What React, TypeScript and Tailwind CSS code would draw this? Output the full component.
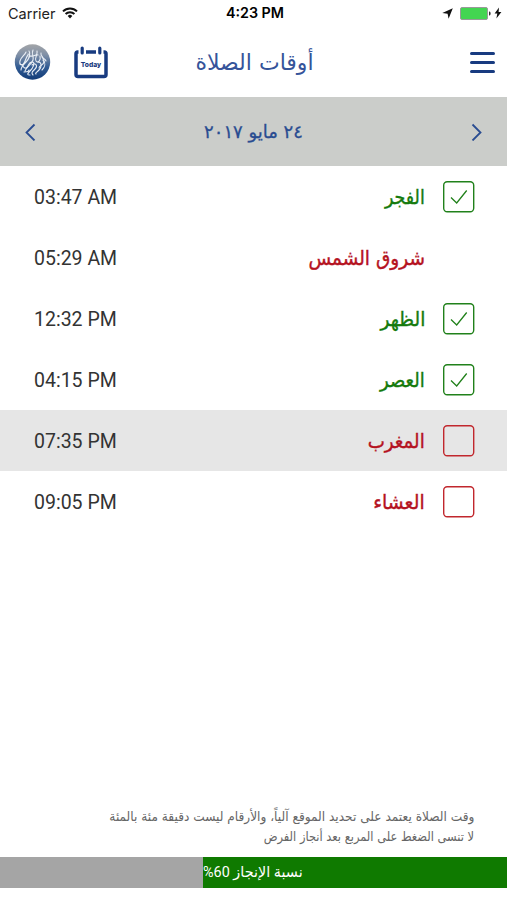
import React from "react";

const prayers = [
  { name: "الفجر", time: "03:47 AM", status: "done", fit: "scale-x-[0.87]" },
  { name: "شروق الشمس", time: "05:29 AM", status: "none", fit: "scale-x-[0.925]" },
  { name: "الظهر", time: "12:32 PM", status: "done", fit: "scale-x-[0.925]" },
  { name: "العصر", time: "04:15 PM", status: "done", fit: "scale-x-[0.9]" },
  { name: "المغرب", time: "07:35 PM", status: "missed", active: true, fit: "scale-x-[0.91]" },
  { name: "العشاء", time: "09:05 PM", status: "missed", fit: "scale-x-[0.94]" },
];

const StatusBar = () => (
  <div className="flex h-7 items-center justify-between pl-2 pr-[5px] font-['Inter',sans-serif] text-black">
    <div className="flex w-[180px] items-center gap-[6px] text-[14.5px] text-[#222]">
      <span>Carrier</span>
      <svg className="-mt-[3px]" width="16" height="12" viewBox="0 0 16 12" fill="none" stroke="#111" strokeWidth="2">
        <path d="M1 4.4a10 10 0 0 1 14 0" />
        <path d="M3.6 7a6.2 6.2 0 0 1 8.8 0" />
        <path d="M5.7 8.9a3.3 3.3 0 0 1 4.6 0L8 11.4z" fill="#111" stroke="none" />
      </svg>
    </div>
    <span className="-mt-[2px] text-[14.300px] font-semibold">4:23 PM</span>
    <div className="-mt-[2px] flex w-[180px] items-center justify-end gap-[4px]">
      <svg className="mr-[3px]" width="11" height="11" viewBox="0 0 11 11">
        <path d="M10.8.3 6.6 10.700 5.600 5.700.3 5.100z" fill="#111" />
      </svg>
      <svg width="31" height="13" viewBox="0 0 31 13">
        <rect x=".5" y=".5" width="27" height="12" rx="1.5" fill="#43d551" stroke="#999" />
        <path d="M29 4.5h.4a1.2 2 0 0 1 0 4H29z" fill="#333" />
      </svg>
      <svg className="-ml-[1px]" width="8" height="12" viewBox="0 0 8 12">
        <path d="M5 .5.6 6.6h2.7L2.4 11.5l5-6.4H4.6z" fill="#111" />
      </svg>
    </div>
  </div>
);

const Logo = () => (
  <svg width="37" height="37" viewBox="0 0 37 37" fill="none">
    <defs>
      <linearGradient id="orb" x1="0" y1="0" x2="0" y2="1">
        <stop offset="0" stopColor="#a3a5a8" />
        <stop offset=".3" stopColor="#8090a7" />
        <stop offset=".65" stopColor="#315b93" />
        <stop offset="1" stopColor="#133c78" />
      </linearGradient>
    </defs>
    <circle cx="18.5" cy="18" r="17.700" fill="url(#orb)" />
    <g stroke="#e9eef5" strokeWidth="1.100" strokeLinecap="round">
      <path d="M12 8c-1 3-5 5-6 9s2 5 4 2 2-6 4-8M15 7c2 3 0 8-3 11s-5 5-5 8M19 6c-2 4 1 6 0 10s-6 6-8 11M23 7c1 4-3 7-1 10s5-1 4-5M27 9c-1 3 4 5 3 9s-5 3-5 6" />
      <path d="M6 20c4 1 3 5 6 4s2-6 6-6 1 6-2 9-3 4 0 4M18 21c4-3 6 1 3 4s-4 4-2 6M24 18c4 0 4 5 1 8s-4 3-3 4M29 16c3 3 2 7-1 10M16 12c4 1 5-2 8-1M10 28c3-1 4 1 5-2M28 13c1 2 3 1 4 4M14 10c2 0 2 2 1 3" />
    </g>
  </svg>
);

const Calendar = () => (
  <svg width="34" height="33" viewBox="0 0 34 33">
    <path
      d="M4.5 6H3.7Q2 6 2 7.8V28.500Q2 30.500 4 30.500H30Q32 30.500 32 28.500V7.800Q32 6 30.300 6H29.500M12 6H22"
      fill="none"
      stroke="#183b80"
      strokeWidth="3.500"
    />
    <path d="M8.200 2V7M25.800 2V7" stroke="#183b80" strokeWidth="3.200" strokeLinecap="round" />
    <text x="17" y="20.500" textAnchor="middle" fontSize="6.700" fontWeight="800" fill="#183b80" fontFamily="Inter, sans-serif">
      Today
    </text>
  </svg>
);

const Box = ({ status }: { status: string }) => {
  if (status === "none") return <div className="size-8" />;
  const color = status === "done" ? "#21811b" : "#c1272d";
  return (
    <svg width="32" height="32" viewBox="0 0 32 32" fill="none" stroke={color}>
      <rect x=".7" y=".7" width="30" height="30" rx="3.500" strokeWidth="1.400" />
      {status === "done" && <path d="M8 16.500 13.700 22 23.700 9.500" strokeWidth="1.300" />}
    </svg>
  );
};

const App = () => {
  return (
    <div className="flex h-[900px] w-[507px] flex-col bg-white font-['DejaVu_Sans',sans-serif]">
      <StatusBar />
      <header className="flex h-[69px] items-center justify-between pl-[14px] pr-3">
        <div className="flex w-24 items-center gap-[23px]">
          <Logo />
          <Calendar />
        </div>
        <h1 dir="rtl" className="whitespace-nowrap text-[22px] text-[#35549a]">
          أوقات الصلاة
        </h1>
        <div className="flex w-24 flex-col items-end gap-[6px]">
          <div className="h-[3px] w-[25px] rounded-full bg-[#183b80]"></div>
          <div className="h-[3px] w-[25px] rounded-full bg-[#183b80]"></div>
          <div className="h-[3px] w-[25px] rounded-full bg-[#183b80]"></div>
        </div>
      </header>

      <div className="flex h-[69px] items-center justify-between bg-[#cbcdca] px-6">
        <svg width="12" height="18" viewBox="0 0 12 18" fill="none" stroke="#294c91" strokeWidth="1.800">
          <path d="M10.500 1.500 2.500 9.500l8 8" />
        </svg>
        <span dir="rtl" className="whitespace-nowrap text-[18px] text-[#294c91] [-webkit-text-stroke:0.3px]">
          ٢٤ مايو ٢٠١٧
        </span>
        <svg width="12" height="18" viewBox="0 0 12 18" fill="none" stroke="#294c91" strokeWidth="1.800">
          <path d="m1.500 1.500 8 8-8 8" />
        </svg>
      </div>

      <main className="flex-1">
        {prayers.map((p) => (
          <div
            key={p.name}
            className={`flex h-[61px] items-center pl-[34px] pr-8 ${p.active ? "bg-[#e6e6e6]" : ""}`}
          >
            <span className="flex-1 origin-left scale-x-[0.975] font-['Roboto',sans-serif] text-[20px] text-[#333]">
              {p.time}
            </span>
            <span
              dir="rtl"
              className={`mr-[18px] origin-right whitespace-nowrap text-[20px] [-webkit-text-stroke:0.4px] ${p.fit} ${
                p.status === "done" ? "text-[#147a0c]" : "text-[#b5121f]"
              }`}
            >
              {p.name}
            </span>
            <Box status={p.status} />
          </div>
        ))}
      </main>

      <footer>
        <div dir="rtl" className="flex flex-col items-start pb-[10px] pr-[33px] text-[13px] leading-5 text-[#666]">
          <p className="origin-right scale-x-[0.935] whitespace-nowrap">
            وقت الصلاة يعتمد على تحديد الموقع آلياً، والأرقام ليست دقيقة مئة بالمئة
          </p>
          <p className="origin-right scale-x-[0.88] whitespace-nowrap">
            لا تنسى الضغط على المربع بعد أنجاز الفرض
          </p>
        </div>
        <div dir="rtl" className="mb-3 flex h-[31px] bg-[#a5a5a5]">
          <div className="flex w-[60%] items-center justify-end bg-[#0f7a00]">
            <span className="origin-left scale-x-[0.96] whitespace-nowrap font-['Roboto','DejaVu_Sans',sans-serif] text-[15px] text-white">
              نسبة الإنجاز 60%
            </span>
          </div>
        </div>
      </footer>
    </div>
  );
};

export default App;
